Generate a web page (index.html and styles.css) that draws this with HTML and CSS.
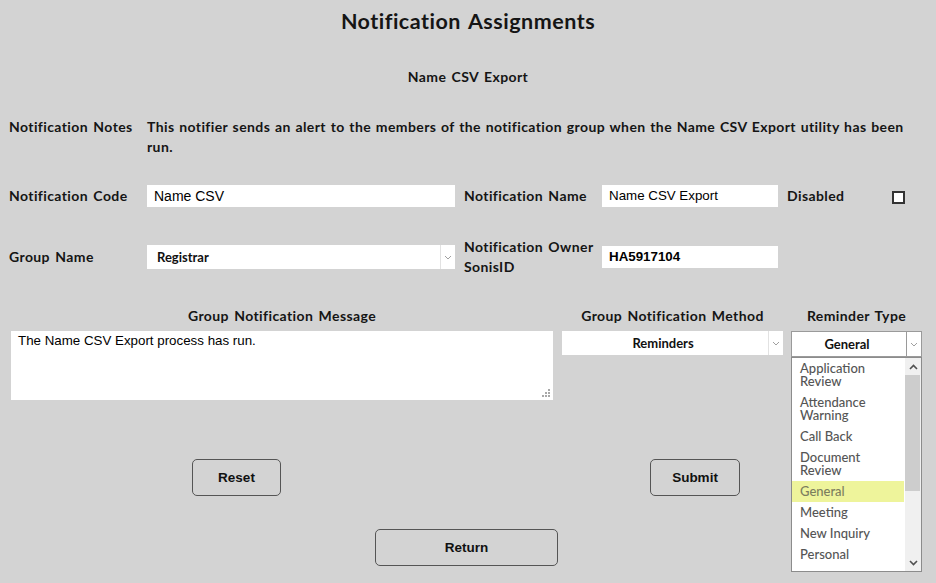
FILE: index.html
```html
<!DOCTYPE html>
<html>
<head>
<meta charset="utf-8">
<title>Notification Assignments</title>
<link rel="stylesheet" href="styles.css">
</head>
<body>
<div class="page">
  <h1 class="title">Notification Assignments</h1>
  <div class="subtitle">Name CSV Export</div>

  <div class="row notes-row">
    <div class="label">Notification Notes</div>
    <div class="notes">This notifier sends an alert to the members of the notification group when the Name CSV Export utility has been run.</div>
  </div>

  <div class="row field-row code-row">
    <div class="label">Notification Code</div>
    <div class="input wide">Name CSV</div>
    <div class="label label2">Notification Name</div>
    <div class="input narrow small">Name CSV Export</div>
    <div class="label label3">Disabled</div>
    <div class="checkbox"></div>
  </div>

  <div class="row field-row group-row">
    <div class="label">Group Name</div>
    <div class="select wide left">
      <span class="select-text">Registrar</span>
      <span class="select-arrow"><svg width="8" height="5" viewBox="0 0 8 5"><path d="M1 1 L4 4 L7 1" fill="none" stroke="#a0a0a0" stroke-width="1"/></svg></span>
    </div>
    <div class="label label2">Notification Owner<br>SonisID</div>
    <div class="input narrow small strong">HA5917104</div>
  </div>

  <div class="columns">
    <div class="col col-msg">
      <div class="col-head">Group Notification Message</div>
      <div class="textarea">The Name CSV Export process has run.
        <svg class="grip" width="8" height="8" viewBox="0 0 8 8"><g fill="#a8a8a8"><rect x="6" y="0" width="2" height="2"/><rect x="3" y="3" width="2" height="2"/><rect x="6" y="3" width="2" height="2"/><rect x="0" y="6" width="2" height="2"/><rect x="3" y="6" width="2" height="2"/><rect x="6" y="6" width="2" height="2"/></g></svg>
      </div>
    </div>
    <div class="col col-method">
      <div class="col-head">Group Notification Method</div>
      <div class="select center">
        <span class="select-text">Reminders</span>
        <span class="select-arrow"><svg width="8" height="5" viewBox="0 0 8 5"><path d="M1 1 L4 4 L7 1" fill="none" stroke="#a0a0a0" stroke-width="1"/></svg></span>
      </div>
    </div>
    <div class="col col-type">
      <div class="col-head">Reminder Type</div>
      <div class="select center bordered">
        <span class="select-text">General</span>
        <span class="select-arrow"><svg width="8" height="5" viewBox="0 0 8 5"><path d="M1 1 L4 4 L7 1" fill="none" stroke="#a0a0a0" stroke-width="1"/></svg></span>
      </div>
      <div class="dropdown">
        <ul class="options">
          <li>Application<br>Review</li>
          <li>Attendance<br>Warning</li>
          <li>Call Back</li>
          <li>Document<br>Review</li>
          <li class="selected">General</li>
          <li>Meeting</li>
          <li>New Inquiry</li>
          <li>Personal</li>
        </ul>
        <div class="scrollbar">
          <span class="sb-btn"><svg width="9" height="6" viewBox="0 0 9 6"><path d="M1 5 L4.5 1.5 L8 5" fill="none" stroke="#505050" stroke-width="1.6"/></svg></span>
          <span class="sb-track"><span class="sb-thumb"></span></span>
          <span class="sb-btn"><svg width="9" height="6" viewBox="0 0 9 6"><path d="M1 1 L4.5 4.5 L8 1" fill="none" stroke="#505050" stroke-width="1.6"/></svg></span>
        </div>
      </div>
    </div>
  </div>

  <div class="buttons">
    <button class="btn btn-reset">Reset</button>
    <button class="btn btn-submit">Submit</button>
  </div>
  <div class="return-row">
    <button class="btn btn-return">Return</button>
  </div>
</div>
</body>
</html>
```
FILE: styles.css
```css
html, body {
  margin: 0;
  padding: 0;
  background: #d3d3d3;
}
body {
  font-family: Lato, "Noto Sans", sans-serif;
  color: #151515;
  width: 936px;
  height: 583px;
  overflow: hidden;
}
.page {
  display: flex;
  flex-direction: column;
}
.title {
  margin: 0;
  height: 42px;
  line-height: 42px;
  text-align: center;
  font-size: 21.5px;
  font-weight: 700;
  letter-spacing: 0.5px;
  word-spacing: 2px;
}
.subtitle {
  margin-top: 25px;
  line-height: 20px;
  text-align: center;
  font-size: 14px;
  font-weight: 700;
  letter-spacing: 0.4px;
  word-spacing: 1.5px;
}
.row {
  display: flex;
  padding-left: 9px;
}
.label {
  width: 138px;
  flex: none;
  font-size: 14px;
  font-weight: 700;
  line-height: 20px;
  letter-spacing: 0.4px;
  word-spacing: 1.5px;
}
.notes-row {
  margin-top: 30px;
}
.notes {
  width: 775px;
  font-size: 14px;
  font-weight: 700;
  line-height: 20px;
  letter-spacing: 0.4px;
  word-spacing: 0.9px;
}
.field-row {
  align-items: center;
}
.code-row {
  margin-top: 28px;
  height: 22px;
}
.group-row {
  margin-top: 30px;
  height: 40px;
}
.input {
  background: #fff;
  height: 22px;
  box-sizing: border-box;
  padding: 0 7px;
  font-family: "Liberation Sans", Arial, sans-serif;
  font-size: 14px;
  line-height: 22px;
  color: #000;
}
.input.small {
  font-size: 13.33px;
}
.input.strong {
  font-weight: 700;
}
.wide {
  width: 308px;
}
.narrow {
  width: 176px;
}
.label2 {
  margin-left: 9px;
}
.label3 {
  margin-left: 9px;
  width: 105px;
}
.checkbox {
  width: 13px;
  height: 13px;
  box-sizing: border-box;
  border: 2px solid #333;
  background: #fff;
  margin-top: 2px;
}
.select {
  position: relative;
  display: flex;
  align-items: center;
  background: #fff;
  height: 24px;
  box-sizing: border-box;
  font-size: 13px;
  font-weight: 700;
  color: #111;
}
.select-text {
  flex: 1;
  padding-left: 10px;
  padding-right: 4px;
}
.select.center .select-text {
  text-align: center;
  padding-left: 0;
}
.select-arrow {
  flex: none;
  width: 14px;
  height: 100%;
  border-left: 1px solid #e2e2e2;
  display: flex;
  align-items: center;
  justify-content: center;
}
.select.bordered {
  border: 1px solid #9a9a9a;
  height: 26px;
}
.select.bordered .select-arrow {
  border-left-color: #9a9a9a;
}
.columns {
  display: flex;
  margin-top: 29px;
  padding-left: 11px;
  gap: 9px;
}
.col {
  display: flex;
  flex-direction: column;
  position: relative;
}
.col-msg { width: 542px; }
.col-method { width: 221px; }
.col-type { width: 131px; margin-left: -1px; }
.col-head {
  text-align: center;
  font-size: 14px;
  font-weight: 700;
  line-height: 20px;
  margin-bottom: 5px;
  letter-spacing: 0.4px;
  word-spacing: 1.5px;
  white-space: nowrap;
}
.textarea {
  position: relative;
  background: #fff;
  height: 69px;
  box-sizing: border-box;
  padding: 2px 7px;
  font-family: "Liberation Sans", Arial, sans-serif;
  font-size: 13.33px;
  line-height: 16px;
  color: #000;
}
.grip {
  position: absolute;
  right: 3px;
  bottom: 3px;
}
.dropdown {
  position: absolute;
  top: 51px;
  left: 0;
  width: 131px;
  height: 215px;
  box-sizing: border-box;
  border: 1px solid #8c8c8c;
  background: #fff;
  display: flex;
  z-index: 2;
}
.options {
  list-style: none;
  margin: 0;
  padding: 0;
  flex: 1;
  overflow: hidden;
}
.options li {
  padding: 4.3px 8px;
  line-height: 12.6px;
  font-size: 13px;
  font-weight: 500;
  color: #555;
}
.options li.selected {
  background: #eef49b;
  color: #7c7e5e;
  margin-right: 1px;
}
.scrollbar {
  width: 16px;
  flex: none;
  background: #f0f0f0;
  display: flex;
  flex-direction: column;
}
.sb-btn {
  height: 17px;
  display: flex;
  align-items: center;
  justify-content: center;
  flex: none;
}
.sb-track {
  flex: 1;
  position: relative;
}
.sb-thumb {
  position: absolute;
  left: 0;
  right: 1px;
  top: 0;
  height: 116px;
  background: #cdcdcd;
}
.buttons {
  display: flex;
  margin-top: 59px;
  padding-left: 192px;
  gap: 369px;
}
.btn {
  background: transparent;
  border: 1px solid #555;
  border-radius: 5px;
  height: 37px;
  font-family: "Liberation Sans", Arial, sans-serif;
  font-size: 13.5px;
  font-weight: 700;
  color: #111;
  padding: 0;
}
.btn-reset { width: 89px; }
.btn-submit { width: 90px; }
.return-row {
  display: flex;
  margin-top: 33px;
  padding-left: 375px;
}
.btn-return { width: 183px; }
```
